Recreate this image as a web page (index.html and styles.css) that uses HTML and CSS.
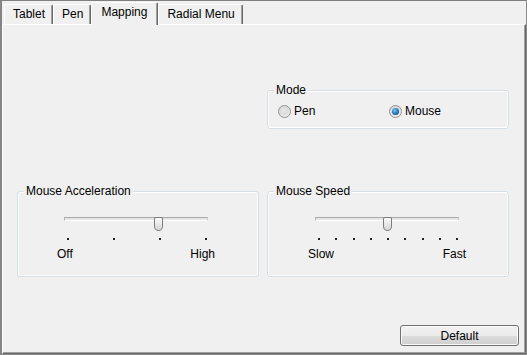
FILE: index.html
```html
<!DOCTYPE html>
<html lang="en">
  <head>
    <meta charset="UTF-8" />
    <meta name="viewport" content="width=device-width, initial-scale=1.0" />
    <title>Mapping</title>
    <link rel="stylesheet" href="styles.css">
  </head>
  <body>
    <div class="dialog">
      <div class="tabs">
        <div class="tab">Tablet</div>
        <div class="tab">Pen</div>
        <div class="tab active">Mapping</div>
        <div class="tab">Radial Menu</div>
      </div>

      <div class="panel">
        <div class="groups">
          <div class="group mode">
            <div class="group-title">Mode</div>
            <div class="radios">
              <label class="radio-item"><span class="radio"></span>Pen</label>
              <label class="radio-item"><span class="radio checked"></span>Mouse</label>
            </div>
          </div>

          <div class="group">
            <div class="group-title">Mouse Acceleration</div>
            <div class="slider-wrap">
              <div class="slider">
                <div class="track"></div>
                <div class="thumb" style="left: 90px"></div>
              </div>
              <div class="ticks">
                <span></span><span></span><span></span><span></span>
              </div>
              <div class="ends"><span>Off</span><span>High</span></div>
            </div>
          </div>

          <div class="group">
            <div class="group-title">Mouse Speed</div>
            <div class="slider-wrap speed">
              <div class="slider">
                <div class="track"></div>
                <div class="thumb" style="left: 68px"></div>
              </div>
              <div class="ticks">
                <span></span><span></span><span></span><span></span><span></span>
                <span></span><span></span><span></span><span></span>
              </div>
              <div class="ends"><span>Slow</span><span>Fast</span></div>
            </div>
          </div>
        </div>

        <div class="footer">
          <button class="btn">Default</button>
        </div>
      </div>
    </div>
  </body>
</html>
```

FILE: styles.css
```css
body {
  margin: 0;
  background: #f0f0f0;
  font-family: "Liberation Sans", Arial, sans-serif;
  font-size: 12px;
  line-height: 14px;
  color: #000;
}

.dialog {
  box-sizing: border-box;
  width: 527px;
  height: 355px;
  display: flex;
  flex-direction: column;
  border-top: 1px solid #7f7f7f;
  border-left: 2px solid #858585;
  border-right: 1px solid #8a8a8a;
  border-bottom: 1px solid #8a8a8a;
}

/* tab strip */
.tabs {
  display: flex;
  align-items: flex-end;
  height: 23px;
  padding-left: 2px;
}

.tab {
  box-sizing: border-box;
  height: 20px;
  padding: 2px 7px 0 8px;
  border-top: 1px solid #fff;
  border-left: 1px solid #fff;
  border-right: 1px solid #696969;
  border-radius: 2px 2px 0 0;
  box-shadow: inset -1px 0 0 #a0a0a0;
  white-space: nowrap;
}

.tab.active {
  position: relative;
  z-index: 1;
  height: 23px;
  margin-bottom: -1px;
  padding: 2px 10px 0 9px;
  background: #f0f0f0;
}

.panel {
  flex: 1;
  padding: 65px 6px 0 14px;
  border-top: 1px solid #fff;
  border-left: 1px solid #fff;
  border-right: 1px solid #696969;
  border-bottom: 1px solid #696969;
  box-shadow: inset -1px -1px 0 #a0a0a0;
}

/* group boxes */
.groups {
  display: grid;
  grid-template-columns: 242px 242px;
  column-gap: 8px;
  row-gap: 62px;
}

.group {
  border: 1px solid #d5dfe5;
  border-radius: 3px;
  box-shadow: inset 0 0 0 1px #fff;
}

.group.mode {
  grid-column: 2;
  padding-bottom: 10px;
}

.group-title {
  width: fit-content;
  margin: -8px 0 0 6px;
  padding: 0 2px;
  background: #f0f0f0;
}

/* radio buttons */
.radios {
  display: grid;
  grid-template-columns: 111px auto;
  margin-top: 7px;
  padding-left: 10px;
}

.radio-item {
  display: flex;
  align-items: center;
  gap: 3px;
}

.radio {
  box-sizing: border-box;
  width: 13px;
  height: 13px;
  display: flex;
  align-items: center;
  justify-content: center;
  border: 1px solid #8e8f8f;
  border-radius: 50%;
  background: radial-gradient(circle at 45% 40%, #e8e8e8 0%, #dadada 45%, #f6f6f6 80%);
}

.radio.checked::after {
  content: "";
  width: 7px;
  height: 7px;
  border-radius: 50%;
  background: radial-gradient(circle at 40% 35%, #7fc6f4 0%, #2a80c2 45%, #0e3f6d 100%);
}

/* sliders */
.slider-wrap {
  width: 144px;
  margin: 19px 0 15px 46px;
}

.slider-wrap.speed {
  margin-left: 47px;
}

.slider {
  position: relative;
  height: 14px;
}

.track {
  box-sizing: border-box;
  height: 4px;
  margin-top: 4px;
  border-top: 1px solid #a9a9a9;
  border-bottom: 1px solid #fff;
  border-left: 1px solid #b6b6b6;
  border-right: 1px solid #d0d0d0;
  background: #e6e6e6;
}

.thumb {
  position: absolute;
  top: 0;
  box-sizing: border-box;
  width: 9px;
  height: 14px;
  border: 1px solid #7b7b7b;
  border-radius: 2px 2px 4px 4px / 2px 2px 5px 5px;
  background: linear-gradient(to bottom, #fdfdfd, #e4e4e4 60%, #d6d6d6);
}

.ticks {
  display: flex;
  justify-content: space-between;
  margin: 7px 1px 0 3px;
}

.ticks span {
  width: 2px;
  height: 2px;
  background: #222;
}

.ends {
  display: flex;
  justify-content: space-between;
  margin: 7px -7px 0 -7px;
}

/* bottom button */
.footer {
  display: flex;
  justify-content: flex-end;
  margin-top: 48px;
}

.btn {
  box-sizing: border-box;
  width: 119px;
  height: 21px;
  padding: 0;
  border: 1px solid #707070;
  border-radius: 3px;
  background: linear-gradient(to bottom, #f2f2f2 0%, #ebebeb 50%, #dddddd 51%, #cfcfcf 100%);
  box-shadow: inset 0 0 0 1px #fbfbfb;
  font-family: "Liberation Sans", Arial, sans-serif;
  font-size: 12px;
  line-height: 14px;
  color: #000;
}
```
